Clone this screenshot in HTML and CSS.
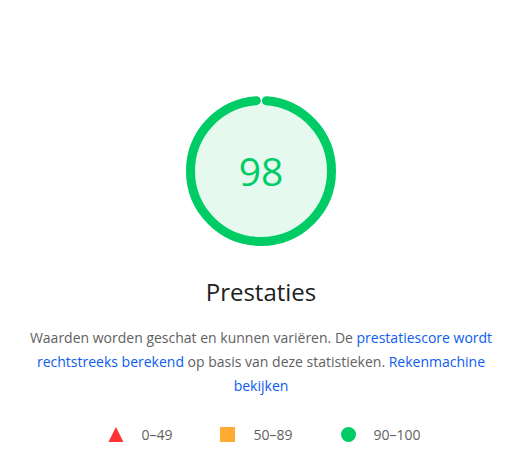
FILE: index.html
```html
<!DOCTYPE html>
<html lang="nl">
<head>
  <meta charset="UTF-8" />
  <meta name="viewport" content="width=device-width, initial-scale=1.0" />
  <title>Prestaties</title>
  <link rel="stylesheet" href="styles.css">
</head>
<body>
  <section class="category">
    <div class="gauge">
      <svg viewBox="0 0 150 150" class="gauge-svg">
        <circle class="gauge-base" cx="75" cy="75" r="70.5"></circle>
        <circle class="gauge-arc" cx="75" cy="75" r="70.5"></circle>
      </svg>
      <div class="gauge-percent">98</div>
    </div>
    <h2 class="gauge-label">Prestaties</h2>
    <p class="description">
      Waarden worden geschat en kunnen variëren. De <a href="#">prestatiescore wordt rechtstreeks berekend</a> op basis van deze statistieken. <a href="#">Rekenmachine bekijken</a>
    </p>
    <div class="scorescale">
      <span class="range range-fail">0–49</span>
      <span class="range range-average">50–89</span>
      <span class="range range-pass">90–100</span>
    </div>
  </section>
</body>
</html>
```

FILE: styles.css
```css
body {
  font-family: 'Open Sans', 'Noto Sans', sans-serif;
  margin: 0;
  padding: 0;
  background-color: #fff;
  color: #212121;
}
.category {
  display: flex;
  flex-direction: column;
  align-items: center;
  padding: 96px 16px 0 20px;
}
.gauge {
  position: relative;
  width: 150px;
  height: 150px;
}
.gauge-svg {
  width: 150px;
  height: 150px;
  display: block;
}
.gauge-base {
  fill: #e5f9ee;
  stroke: none;
}
.gauge-arc {
  fill: none;
  stroke: #0c6;
  stroke-width: 9;
  stroke-linecap: round;
  stroke-dasharray: 432 443;
  stroke-dashoffset: -5.5;
  transform: rotate(-90deg);
  transform-origin: 75px 75px;
}
.gauge-percent {
  position: absolute;
  top: 0;
  left: 0;
  width: 150px;
  line-height: 150px;
  text-align: center;
  font-size: 39px;
  color: #0c6;
}
.gauge-label {
  font-size: 24px;
  font-weight: normal;
  margin: 30px 0 0;
  line-height: 32px;
}
.description {
  font-size: 14px;
  line-height: 24px;
  color: #616161;
  text-align: center;
  max-width: 482px;
  margin: 18px 0 0;
}
.description a {
  color: #0b5cf0;
  text-decoration: none;
}
.scorescale {
  display: flex;
  align-items: center;
  margin-top: 27px;
  padding-left: 7px;
  font-size: 14px;
  color: #616161;
}
.range {
  display: flex;
  align-items: center;
  margin: 0 24px;
}
.range::before {
  content: '';
  width: 15px;
  height: 15px;
  margin-right: 18px;
}
.range-fail::before {
  background: #f33;
  clip-path: polygon(50% 0, 100% 100%, 0 100%);
}
.range-average::before {
  background: #fa3;
}
.range-pass::before {
  background: #0c6;
  border-radius: 50%;
}
```
